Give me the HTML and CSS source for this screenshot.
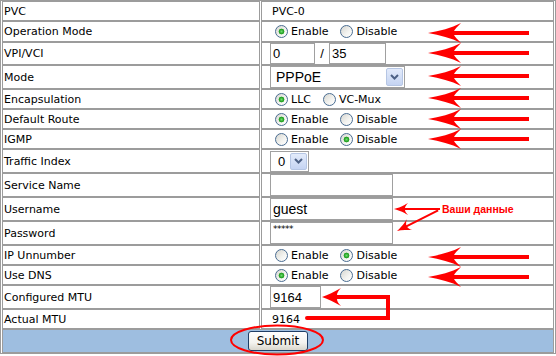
FILE: index.html
```html
<!DOCTYPE html>
<html>
<head>
<meta charset="utf-8">
<title>PVC</title>
<link rel="stylesheet" href="styles.css">
</head>
<body>
<div class="page">
  <table class="cfg">
    <tr class="r20"><td class="lbl">PVC</td><td class="val"><span class="txt">PVC-0</span></td></tr>
    <tr class="r21"><td class="lbl">Operation Mode</td><td class="val"><label class="opt"><input type="radio" name="op" checked>Enable</label><label class="opt"><input type="radio" name="op">Disable</label></td></tr>
    <tr class="r22"><td class="lbl">VPI/VCI</td><td class="val"><input class="in vpi" value="0"><span class="slash">/</span><input class="in vci" value="35"></td></tr>
    <tr class="r24"><td class="lbl">Mode</td><td class="val"><span class="sel mode"><span class="sel-text">PPPoE</span><span class="sel-btn"><svg width="9" height="6" viewBox="0 0 9 6"><polyline points="1,1 4.5,4.5 8,1" fill="none" stroke="#4d6185" stroke-width="2"/></svg></span></span></td></tr>
    <tr class="r20"><td class="lbl">Encapsulation</td><td class="val"><label class="opt"><input type="radio" name="enc" checked>LLC</label><label class="opt"><input type="radio" name="enc">VC-Mux</label></td></tr>
    <tr class="r20"><td class="lbl">Default Route</td><td class="val"><label class="opt"><input type="radio" name="dr" checked>Enable</label><label class="opt"><input type="radio" name="dr">Disable</label></td></tr>
    <tr class="r20"><td class="lbl">IGMP</td><td class="val"><label class="opt"><input type="radio" name="igmp">Enable</label><label class="opt"><input type="radio" name="igmp" checked>Disable</label></td></tr>
    <tr class="r24"><td class="lbl">Traffic Index</td><td class="val"><span class="sel traffic"><span class="sel-text">0</span><span class="sel-btn"><svg width="9" height="6" viewBox="0 0 9 6"><polyline points="1,1 4.5,4.5 8,1" fill="none" stroke="#4d6185" stroke-width="2"/></svg></span></span></td></tr>
    <tr class="r24"><td class="lbl">Service Name</td><td class="val"><input class="in wide" value=""></td></tr>
    <tr class="r24"><td class="lbl">Username</td><td class="val"><input class="in wide user" value="guest"></td></tr>
    <tr class="r24"><td class="lbl">Password</td><td class="val"><input class="in wide pass" value="*****"></td></tr>
    <tr class="r20"><td class="lbl">IP Unnumber</td><td class="val"><label class="opt"><input type="radio" name="ipu">Enable</label><label class="opt"><input type="radio" name="ipu" checked>Disable</label></td></tr>
    <tr class="r20"><td class="lbl">Use DNS</td><td class="val"><label class="opt"><input type="radio" name="dns" checked>Enable</label><label class="opt"><input type="radio" name="dns">Disable</label></td></tr>
    <tr class="r24"><td class="lbl">Configured MTU</td><td class="val"><input class="in mtu" value="9164"></td></tr>
    <tr class="r20"><td class="lbl">Actual MTU</td><td class="val"><span class="txt">9164</span></td></tr>
    <tr class="r24"><td class="act" colspan="2"><button class="submit" type="button">Submit</button></td></tr>
  </table>

  <svg class="notes" width="556" height="356" viewBox="0 0 556 356">
    <defs>
      <path id="arr" d="M428,0 C440,-2 451,-5 461,-10 C457,-6 455,-4 454,-2 L529,-2 L529,2 L454,2 C455,4 457,6 461,10 C451,5 440,2 428,0 Z"/>
      <path id="sarr" d="M0,0 C4,-1 9,-3 14,-6 C12,-4 11,-2 11,-1 L46,-1 L46,1 L11,1 C11,2 12,4 14,6 C9,3 4,1 0,0 Z"/>
    </defs>
    <g fill="#ff0000">
      <use href="#arr" y="33"/>
      <use href="#arr" y="53"/>
      <use href="#arr" y="76"/>
      <use href="#arr" y="98"/>
      <use href="#arr" y="119"/>
      <use href="#arr" y="139"/>
      <use href="#arr" y="257"/>
      <use href="#arr" y="277"/>
      <use href="#sarr" transform="translate(394,209)"/>
      <use href="#sarr" transform="translate(397,231) rotate(-26.6)"/>
      <path d="M322,297 C328,295 334,292 341,288 C338,291 337,293 337,295 L337,299 C337,301 338,303 341,306 C334,302 328,299 322,297 Z"/>
    </g>
    <polyline points="336,297 388,297 388,318 307,318" fill="none" stroke="#ff0000" stroke-width="4" stroke-linecap="round" stroke-linejoin="miter"/>
    <ellipse cx="277" cy="340" rx="46" ry="14.5" fill="none" stroke="#ff0000" stroke-width="2"/>
    <text class="note-text" x="442" y="213">Ваши данные</text>
  </svg>
</div>
</body>
</html>
```

FILE: styles.css
```css
html, body {
  margin: 0;
  padding: 0;
  background: #ffffff;
}

body {
  font-family: "DejaVu Sans", Verdana, sans-serif;
  font-size: 11px;
  color: #000000;
}

.page {
  position: relative;
  width: 556px;
  height: 356px;
}

.cfg {
  width: 556px;
  border: 1px solid #9c9c9c;
  border-spacing: 1px 0;
  table-layout: fixed;
}

.cfg td {
  border: 1px solid #9c9c9c;
  padding: 0;
  vertical-align: middle;
  white-space: nowrap;
}

.cfg td.lbl {
  box-sizing: border-box;
  width: 258px;
  padding-left: 1px;
}

.cfg td.val {
  padding-left: 8px;
}

tr.r20 { height: 20px; }
tr.r21 { height: 21px; }
tr.r22 { height: 22px; }
tr.r24 { height: 24px; }

.txt {
  padding-left: 2px;
}

.opt {
  display: inline-block;
  margin-right: 7px;
}

.opt input {
  -webkit-appearance: none;
  appearance: none;
  box-sizing: border-box;
  width: 13px;
  height: 13px;
  margin: 0 3px 0 5px;
  border: 1px solid #4a6d92;
  border-radius: 50%;
  background: linear-gradient(135deg, #d6d6d0 0%, #f4f4f1 60%, #ffffff 100%);
  vertical-align: -3px;
}

.opt input:checked {
  background:
    radial-gradient(circle at 50% 50%, #6fdc6f 0, #2aa52a 2px, #21a121 2.6px, rgba(33,161,33,0) 3.2px),
    linear-gradient(135deg, #d6d6d0 0%, #f4f4f1 60%, #ffffff 100%);
}

.in {
  box-sizing: border-box;
  height: 22px;
  border: 1px solid #a0a0a0;
  padding: 0 2px;
  margin: 0;
  font-family: "Liberation Sans", Arial, sans-serif;
  font-size: 13px;
  color: #000;
  background: #fff;
  vertical-align: middle;
  outline: none;
}

.vpi { width: 45px; height: 21px; }
.vci { width: 57px; height: 21px; }
.wide { width: 123px; }
.user { font-size: 14px; }
.mtu { width: 51px; }

.pass {
  font-family: "DejaVu Sans", sans-serif;
  font-size: 9px;
  padding-bottom: 9px;
  letter-spacing: -0.5px;
}

.slash {
  display: inline-block;
  width: 14px;
  text-align: center;
  font-family: "Liberation Sans", Arial, sans-serif;
  font-size: 13px;
  vertical-align: middle;
}

.sel {
  box-sizing: border-box;
  display: inline-flex;
  align-items: center;
  justify-content: space-between;
  border: 1px solid #a0a0a0;
  padding: 1px 1px 1px 5px;
  background: #fff;
  vertical-align: middle;
  font-family: "Liberation Sans", Arial, sans-serif;
  color: #000;
}

.sel.mode {
  width: 135px;
  height: 22px;
  font-size: 14px;
}

.sel.traffic {
  width: 39px;
  height: 21px;
  font-size: 13px;
  padding-left: 7px;
}

.sel-btn {
  box-sizing: border-box;
  display: flex;
  align-items: center;
  justify-content: center;
  width: 17px;
  height: 100%;
  border: 1px solid #b6c6e4;
  border-radius: 2px;
  background: linear-gradient(#e3ebfb, #c5d4f2);
}

.cfg td.act {
  background: #9ebee0;
  text-align: center;
}

.submit {
  box-sizing: border-box;
  width: 60px;
  height: 20px;
  margin: 0;
  padding: 0;
  border: 1px solid #1f3e66;
  border-radius: 3px;
  background: linear-gradient(#ffffff 0%, #f3f3ef 60%, #d9d6cc 100%);
  font-family: "DejaVu Sans", Verdana, sans-serif;
  font-size: 12px;
  color: #000;
  vertical-align: middle;
}

.notes {
  position: absolute;
  left: 0;
  top: 0;
  pointer-events: none;
}

.note-text {
  font-family: "Liberation Sans", Arial, sans-serif;
  font-weight: bold;
  font-size: 10.5px;
  fill: #ff0000;
}
```
